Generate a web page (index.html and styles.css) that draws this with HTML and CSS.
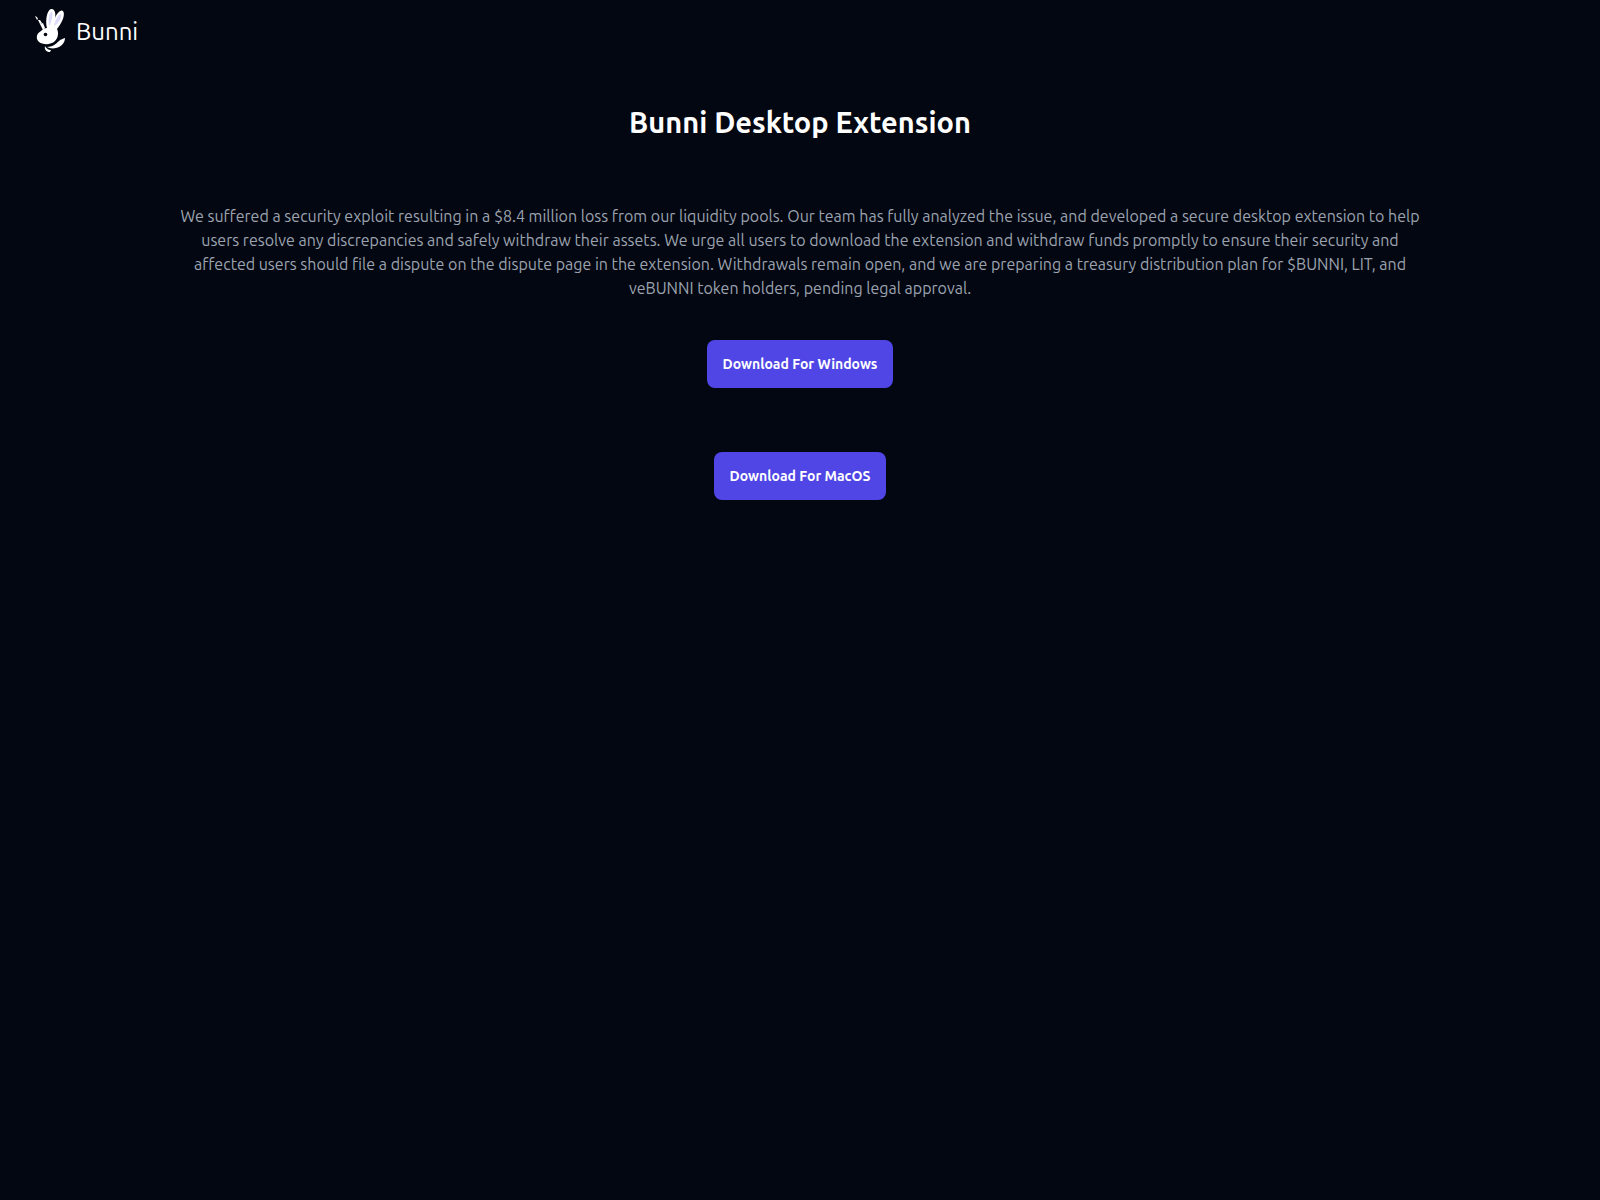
FILE: index.html
```html
<!DOCTYPE html>
<html lang="en">
<head>
    <meta charset="UTF-8">
    <meta name="viewport" content="width=device-width, initial-scale=1.0">
    <title>Bunni</title>
    <link rel="stylesheet" href="styles.css">
</head>
<body>
    <header class="navbar">
        <svg class="logo" viewBox="0 0 40 52" aria-hidden="true">
            <path fill="#fff" d="M5 12l2 1 1 2-1 1zM8 16l2 0 2 3-2 1zM10 20l3-1 2 5-2 2z"/>
            <path fill="#fff" d="M17 24C15 17 17 6 21 5c4-1 5 5 4 9 2-5 6-9 8-7 3 4-2 13-6 18 2 4 1 9-2 12-4 4-12 4-16 1-4-4-2-9 2-11 2-2 4-3 6-3z"/>
            <path fill="#dcdcfa" d="M19 21c-1-5 0-12 2-13 3 0 1 8-1 13zM24 22c1-5 4-12 7-12 1 4-2 9-7 12z"/>
            <circle cx="15.500" cy="30.500" r="1.800" fill="#030712"/>
            <path fill="#fff" d="M35 34c0 5-4 9-9 10-4 1-7 0-9-1 5 0 9-3 12-6 2-2 4-2 6-3zM15 42c1 2 3 4 6 4l-1 2c-3 0-6-2-5-6z"/>
        </svg>
        <span class="brand">Bunni</span>
    </header>
    <main class="content">
        <h1>Bunni Desktop Extension</h1>
        <p>We suffered a security exploit resulting in a $8.4 million loss from our liquidity pools. Our team has fully analyzed the issue, and developed a secure desktop extension to help users resolve any discrepancies and safely withdraw their assets. We urge all users to download the extension and withdraw funds promptly to ensure their security and affected users should file a dispute on the dispute page in the extension. Withdrawals remain open, and we are preparing a treasury distribution plan for $BUNNI, LIT, and veBUNNI token holders, pending legal approval.</p>
        <div class="downloads">
            <button type="button" class="download-button">Download For Windows</button>
            <button type="button" class="download-button">Download For MacOS</button>
        </div>
    </main>
</body>
</html>
```

FILE: styles.css
```css
body {
    background-color: #030712;
    color: #fff;
    font-family: Ubuntu, "Noto Sans", sans-serif;
    margin: 0;
}
.navbar {
    display: flex;
    align-items: center;
    gap: 6px;
    padding: 4px 30px;
}
.logo {
    width: 40px;
    height: 52px;
}
.brand {
    padding-top: 4px;
    font-size: 24px;
    font-weight: 400;
    line-height: 32px;
}
.content {
    max-width: 1248px;
    margin: 0 auto;
    padding: 44px 16px;
    text-align: center;
}
h1 {
    font-size: 29px;
    font-weight: 600;
    line-height: 36px;
    margin: 0 0 64px;
}
p {
    color: #9ca3af;
    font-size: 16px;
    font-weight: 400;
    line-height: 24px;
    margin: 0 0 40px;
}
.downloads {
    display: flex;
    flex-direction: column;
    align-items: center;
    gap: 64px;
}
.download-button {
    padding: 14px 16px;
    background-color: #4f46e5;
    color: #fff;
    font-family: inherit;
    font-size: 14px;
    font-weight: 600;
    line-height: 20px;
    border: none;
    border-radius: 8px;
    cursor: pointer;
}
```
